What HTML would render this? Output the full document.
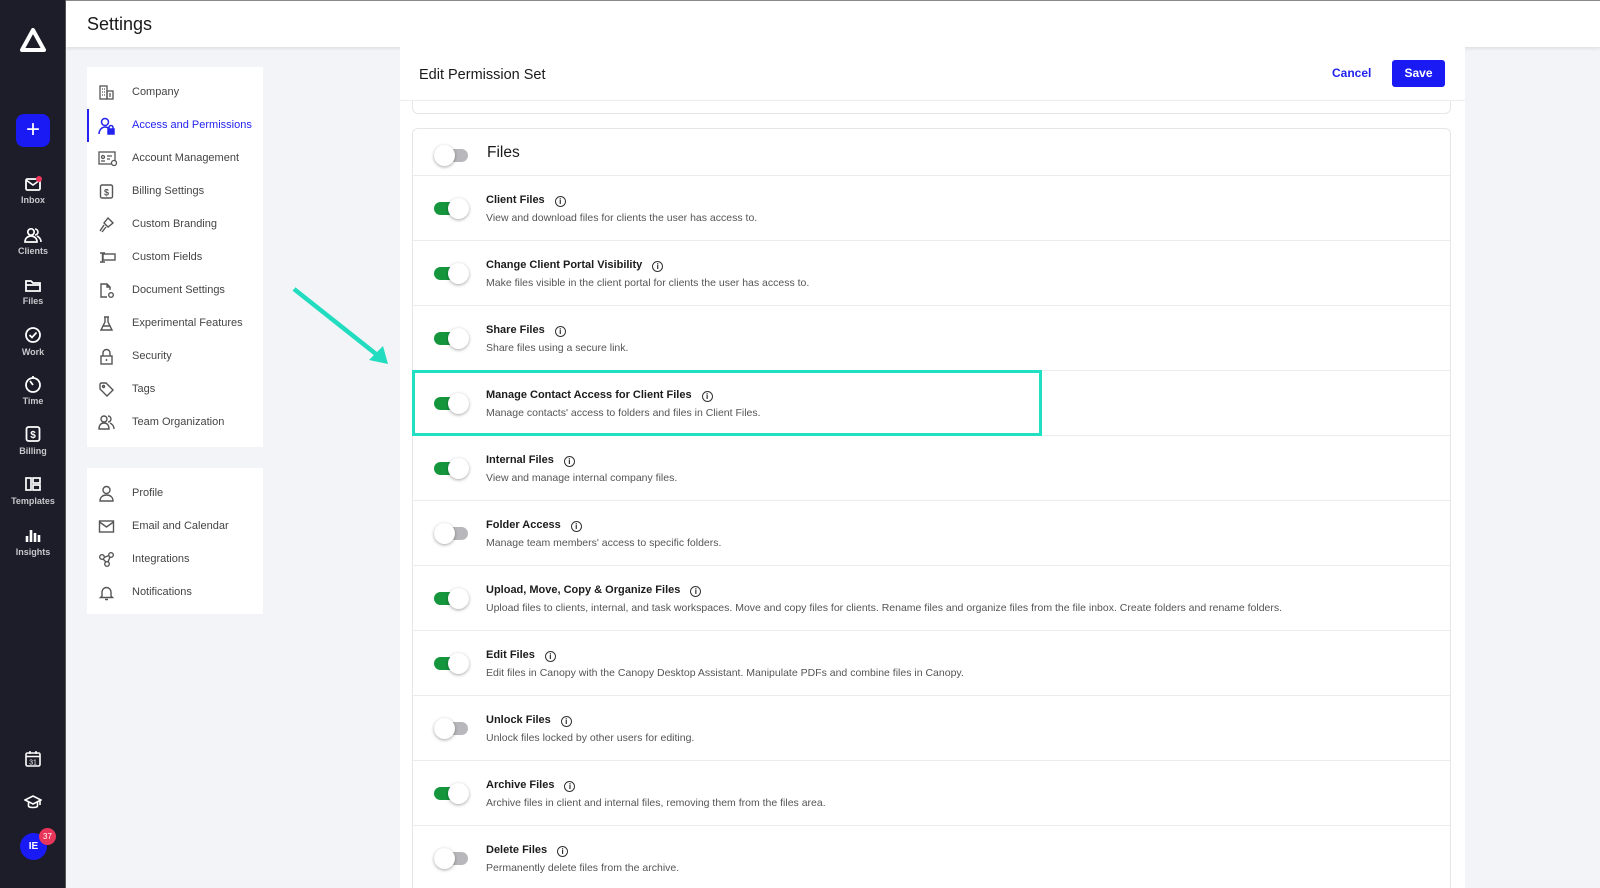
<!DOCTYPE html>
<html><head><meta charset="utf-8">
<style>
*{box-sizing:border-box;margin:0;padding:0}
html{width:1600px;height:888px;overflow:hidden}
body{width:1600px;height:888px;overflow:hidden;background:#f3f4f8;font-family:"Liberation Sans",sans-serif;position:relative}
.abs{position:absolute}
#side{left:0;top:0;width:66px;height:888px;background:#1d1c29;border-right:1px solid #555}
.nv{position:absolute;left:0;width:66px;text-align:center;color:#c8c8cc;font-size:9px;font-weight:bold}
.nv svg{display:block;margin:0 auto 3px}
#hdr{left:66px;top:0;width:1534px;height:47px;background:#fff;box-shadow:0 2px 3px rgba(0,0,0,.08);border-top:1px solid #888}
.menu{background:#fff;left:87px;width:176px}
.mi{position:absolute;left:0;width:176px;height:33px;font-size:11px;color:#444;line-height:33px;padding-left:45px;margin-top:2px}
.mi svg{position:absolute;left:11px;top:8px}
.mi.act{color:#2323f0;border-left:2px solid #2323f0;padding-left:43px}
.mi.act svg{left:9px}
#panel{left:400px;top:47px;width:1065px;height:841px;background:#fff;overflow:hidden}
.row{position:absolute;left:0;width:1039px;border-top:1px solid #ececf0}
.tg{position:absolute;left:21px;width:34px;height:13px;border-radius:7px;background:#b8b8bc}
.tg::after{content:"";position:absolute;top:-4px;left:0;width:21px;height:21px;border-radius:50%;background:#fff;box-shadow:0 1px 3px rgba(0,0,0,.35)}
.tg.on{background:#15963d}
.tg.on::after{left:14px}
.t{position:absolute;left:73px;font-size:11px;font-weight:bold;color:#1c1c1c;margin-top:3px}
.t i{display:inline-block;width:11px;height:11px;border:1.2px solid #333;border-radius:50%;font-style:normal;font-size:8px;text-align:center;line-height:9px;margin-left:10px;vertical-align:-1px}
.d{position:absolute;left:73px;font-size:10.5px;color:#555;margin-top:2px}
</style></head><body>
<div id="side" class="abs">
 <svg class="abs" style="left:20px;top:28px" width="26" height="24" viewBox="0 0 26 24"><path d="M13 2 L24 22 H2 Z" fill="none" stroke="#fff" stroke-width="4" stroke-linejoin="round"/></svg>
 <div class="abs" style="left:16px;top:114px;width:34px;height:33px;background:#1a1af5;border-radius:8px;color:#fff;font-size:24px;text-align:center;line-height:32px">+</div>
 <div class="nv" style="top:176px"><svg width="18" height="16" viewBox="0 0 18 16"><rect x="2" y="3" width="14" height="11" rx="1.5" fill="none" stroke="#fff" stroke-width="1.8"/><path d="M2 4l7 5 7-5" fill="none" stroke="#fff" stroke-width="1.6"/><circle cx="15" cy="3" r="3" fill="#f0365a"/></svg>Inbox</div>
 <div class="nv" style="top:227px"><svg width="18" height="16" viewBox="0 0 18 16"><circle cx="7" cy="5" r="3.2" fill="none" stroke="#fff" stroke-width="1.7"/><path d="M1 15c0-4 3-6 6-6s6 2 6 6z" fill="none" stroke="#fff" stroke-width="1.7"/><path d="M11 2a3 3 0 010 6M13 9c2 1 4 3 4 6" fill="none" stroke="#fff" stroke-width="1.6"/></svg>Clients</div>
 <div class="nv" style="top:277px"><svg width="18" height="16" viewBox="0 0 18 16"><path d="M2 4h5l2 2h7v8H2z M2 8h14" fill="none" stroke="#fff" stroke-width="1.8"/></svg>Files</div>
 <div class="nv" style="top:326px"><svg width="18" height="18" viewBox="0 0 18 18"><circle cx="9" cy="9" r="7" fill="none" stroke="#fff" stroke-width="1.8"/><path d="M5.5 9l2.5 2.5 4.5-5" fill="none" stroke="#fff" stroke-width="1.8"/></svg>Work</div>
 <div class="nv" style="top:375px"><svg width="18" height="18" viewBox="0 0 18 18"><circle cx="9" cy="10" r="7" fill="none" stroke="#fff" stroke-width="1.8"/><path d="M9 10L6 6M9 1v2" stroke="#fff" stroke-width="1.8"/></svg>Time</div>
 <div class="nv" style="top:425px"><svg width="18" height="18" viewBox="0 0 18 18"><rect x="2.5" y="2" width="13" height="14" rx="2" fill="none" stroke="#fff" stroke-width="1.8"/><text x="9" y="13" font-size="10" font-weight="bold" fill="#fff" text-anchor="middle" font-family="Liberation Sans">$</text></svg>Billing</div>
 <div class="nv" style="top:475px"><svg width="18" height="18" viewBox="0 0 18 18"><rect x="2" y="3" width="5" height="12" fill="none" stroke="#fff" stroke-width="1.7"/><rect x="9" y="3" width="7" height="5" fill="none" stroke="#fff" stroke-width="1.7"/><rect x="9" y="10" width="7" height="5" fill="none" stroke="#fff" stroke-width="1.7"/></svg>Templates</div>
 <div class="nv" style="top:526px"><svg width="18" height="18" viewBox="0 0 18 18"><path d="M3 16V10M7 16V4M11 16V7M15 16V9" stroke="#fff" stroke-width="2.6"/></svg>Insights</div>
 <svg class="abs" style="left:24px;top:750px" width="18" height="18" viewBox="0 0 18 18"><rect x="2" y="3" width="14" height="13" rx="1.5" fill="none" stroke="#fff" stroke-width="1.6"/><path d="M2 6.5h14M6 1v3M12 1v3" stroke="#fff" stroke-width="1.5"/><text x="9" y="14.5" font-size="7" fill="#fff" text-anchor="middle" font-family="Liberation Sans">31</text></svg>
 <svg class="abs" style="left:24px;top:793px" width="18" height="18" viewBox="0 0 18 18"><path d="M1 7l8-4 8 4-8 4z" fill="none" stroke="#fff" stroke-width="1.6"/><path d="M4.5 9v4c0 2 9 2 9 0V9M16 7v5" fill="none" stroke="#fff" stroke-width="1.6"/></svg>
 <div class="abs" style="left:20px;top:833px;width:27px;height:27px;border-radius:50%;background:#1a1af5;color:#fff;font-size:10px;font-weight:bold;text-align:center;line-height:27px">IE</div>
 <div class="abs" style="left:39px;top:828px;width:17px;height:17px;border-radius:50%;background:#e8365a;color:#fff;font-size:8px;text-align:center;line-height:17px">37</div>
</div>
<div id="hdr" class="abs"><div class="abs" style="left:21px;top:13px;font-size:18px;color:#1a1a1a">Settings</div></div>

<div class="abs menu" style="top:67px;height:380px">
 <div class="mi" style="top:7px"><svg width="17" height="17" viewBox="0 0 17 17" fill="none" stroke="#555" stroke-width="1.3"><rect x="2" y="2" width="7" height="13"/><rect x="9" y="7" width="6" height="8"/><path d="M4 5h1M6 5h1M4 8h1M6 8h1M4 11h1M6 11h1M11 10h2M11 12h2"/></svg>Company</div>
 <div class="mi act" style="top:40px"><svg width="18" height="18" viewBox="0 0 18 18" fill="none" stroke="#2323f0" stroke-width="1.5"><circle cx="7" cy="5" r="3.5"/><path d="M1 17c0-4 3-7 6-7 1.5 0 2.5.4 3.5 1"/><rect x="10" y="12" width="6" height="5" fill="#2323f0"/><path d="M11 12v-1.5a2 2 0 014 0V12"/></svg>Access and Permissions</div>
 <div class="mi" style="top:73px"><svg width="20" height="17" viewBox="0 0 20 17" fill="none" stroke="#555" stroke-width="1.3"><rect x="1" y="2" width="16" height="12"/><circle cx="5" cy="7" r="1.5"/><path d="M3 11h4M9 6h5M9 9h3"/><circle cx="16" cy="13" r="2.5" fill="#fff"/></svg>Account Management</div>
 <div class="mi" style="top:106px"><svg width="17" height="17" viewBox="0 0 17 17" fill="none" stroke="#555" stroke-width="1.4"><rect x="2.5" y="2" width="12" height="13" rx="1.5"/><text x="8.5" y="12.5" font-size="9" fill="#555" stroke="none" text-anchor="middle" font-family="Liberation Sans" font-weight="bold">$</text></svg>Billing Settings</div>
 <div class="mi" style="top:139px"><svg width="17" height="17" viewBox="0 0 17 17" fill="none" stroke="#555" stroke-width="1.4"><path d="M10 2l5 5-5 4-4-4zM6 9l-4 6M8 11l-4 5"/></svg>Custom Branding</div>
 <div class="mi" style="top:172px"><svg width="18" height="17" viewBox="0 0 18 17" fill="none" stroke="#555" stroke-width="1.4"><rect x="5" y="5" width="12" height="6"/><path d="M2 4h5M2 13h5M4.5 4v9"/></svg>Custom Fields</div>
 <div class="mi" style="top:205px"><svg width="17" height="17" viewBox="0 0 17 17" fill="none" stroke="#555" stroke-width="1.4"><path d="M12 8V5l-3-3H3v13h6M9 2v3h3"/><circle cx="13" cy="13" r="2.3"/></svg>Document Settings</div>
 <div class="mi" style="top:238px"><svg width="17" height="17" viewBox="0 0 17 17" fill="none" stroke="#555" stroke-width="1.4"><path d="M6 2h5M7 2v5L3 15h11L10 7V2M5 11h7"/></svg>Experimental Features</div>
 <div class="mi" style="top:271px"><svg width="17" height="17" viewBox="0 0 17 17" fill="none" stroke="#555" stroke-width="1.4"><rect x="3" y="8" width="11" height="8"/><path d="M5 8V5a3.5 3.5 0 017 0v3M8.5 11v2"/></svg>Security</div>
 <div class="mi" style="top:304px"><svg width="17" height="17" viewBox="0 0 17 17" fill="none" stroke="#555" stroke-width="1.4"><path d="M2 3v5l7 7 6-6-7-7H3z"/><circle cx="5.5" cy="5.5" r="1"/></svg>Tags</div>
 <div class="mi" style="top:337px"><svg width="18" height="17" viewBox="0 0 18 17" fill="none" stroke="#555" stroke-width="1.4"><circle cx="6" cy="5" r="3"/><path d="M1 15c0-4 2-6 5-6s5 2 5 6zM10 2a3 3 0 010 6M12 9c2 1 4 3 4 6"/></svg>Team Organization</div>
</div>
<div class="abs menu" style="top:468px;height:146px">
 <div class="mi" style="top:7px"><svg width="17" height="17" viewBox="0 0 17 17" fill="none" stroke="#555" stroke-width="1.4"><circle cx="8.5" cy="5" r="3.5"/><path d="M2 16c0-4 3-6 6.5-6s6.5 2 6.5 6z"/></svg>Profile</div>
 <div class="mi" style="top:40px"><svg width="17" height="17" viewBox="0 0 17 17" fill="none" stroke="#555" stroke-width="1.4"><rect x="1.5" y="3" width="14" height="11"/><path d="M1.5 4l7 5 7-5"/></svg>Email and Calendar</div>
 <div class="mi" style="top:73px"><svg width="17" height="17" viewBox="0 0 17 17" fill="none" stroke="#555" stroke-width="1.4"><circle cx="4" cy="6" r="2.3"/><circle cx="13" cy="4" r="2.3"/><circle cx="9" cy="13" r="2.3"/><path d="M6 6.5l5-2M5 8l3 3M12 6l-2 5"/></svg>Integrations</div>
 <div class="mi" style="top:106px"><svg width="17" height="17" viewBox="0 0 17 17" fill="none" stroke="#555" stroke-width="1.4"><path d="M4 12V8a4.5 4.5 0 019 0v4l1.5 1.5h-12zM7 15.5h3"/></svg>Notifications</div>
</div>

<svg class="abs" style="left:285px;top:280px" width="110" height="95" viewBox="0 0 110 95"><path d="M9 9 L96 78" stroke="#22dcbf" stroke-width="4.5"/><path d="M103 84 L84 80 L98 66 Z" fill="#22dcbf"/></svg>

<div id="panel" class="abs">
 <div class="abs" style="left:19px;top:20px;font-size:14.5px;color:#1a1a1a;font-weight:500">Edit Permission Set</div>
 <div class="abs" style="left:932px;top:19px;font-size:12px;font-weight:bold;color:#2323f0">Cancel</div>
 <div class="abs" style="left:992px;top:13px;width:53px;height:27px;background:#1a1af5;border-radius:3px;color:#fff;font-size:12px;font-weight:bold;text-align:center;line-height:27px">Save</div>
 <div class="abs" style="left:0;top:53px;width:1065px;border-top:1px solid #ececf0"></div>
 <div class="abs" style="left:12px;top:54px;width:1039px;height:13px;border:1px solid #e6e6ea;border-top:none;border-radius:0 0 6px 6px"></div>
 <div class="abs" style="left:12px;top:81px;width:1039px;height:760px;border:1px solid #e6e6ea;border-radius:6px 6px 0 0;border-bottom:none;overflow:hidden">
  <div class="tg" style="top:20px"></div>
  <div class="abs" style="left:74px;top:15px;font-size:15.5px;font-weight:500;color:#1a1a1a">Files</div>
  <div class="row" style="top:46px;height:65px"><div class="tg on" style="top:26px"></div><div class="t" style="top:15px">Client Files<i>i</i></div><div class="d" style="top:34px">View and download files for clients the user has access to.</div></div>
  <div class="row" style="top:111px;height:65px"><div class="tg on" style="top:26px"></div><div class="t" style="top:15px">Change Client Portal Visibility<i>i</i></div><div class="d" style="top:34px">Make files visible in the client portal for clients the user has access to.</div></div>
  <div class="row" style="top:176px;height:65px"><div class="tg on" style="top:26px"></div><div class="t" style="top:15px">Share Files<i>i</i></div><div class="d" style="top:34px">Share files using a secure link.</div></div>
  <div class="row" style="top:241px;height:65px"><div class="tg on" style="top:26px"></div><div class="t" style="top:15px">Manage Contact Access for Client Files<i>i</i></div><div class="d" style="top:34px">Manage contacts' access to folders and files in Client Files.</div></div>
  <div class="row" style="top:306px;height:65px"><div class="tg on" style="top:26px"></div><div class="t" style="top:15px">Internal Files<i>i</i></div><div class="d" style="top:34px">View and manage internal company files.</div></div>
  <div class="row" style="top:371px;height:65px"><div class="tg" style="top:26px"></div><div class="t" style="top:15px">Folder Access<i>i</i></div><div class="d" style="top:34px">Manage team members' access to specific folders.</div></div>
  <div class="row" style="top:436px;height:65px"><div class="tg on" style="top:26px"></div><div class="t" style="top:15px">Upload, Move, Copy &amp; Organize Files<i>i</i></div><div class="d" style="top:34px">Upload files to clients, internal, and task workspaces. Move and copy files for clients. Rename files and organize files from the file inbox. Create folders and rename folders.</div></div>
  <div class="row" style="top:501px;height:65px"><div class="tg on" style="top:26px"></div><div class="t" style="top:15px">Edit Files<i>i</i></div><div class="d" style="top:34px">Edit files in Canopy with the Canopy Desktop Assistant. Manipulate PDFs and combine files in Canopy.</div></div>
  <div class="row" style="top:566px;height:65px"><div class="tg" style="top:26px"></div><div class="t" style="top:15px">Unlock Files<i>i</i></div><div class="d" style="top:34px">Unlock files locked by other users for editing.</div></div>
  <div class="row" style="top:631px;height:65px"><div class="tg on" style="top:26px"></div><div class="t" style="top:15px">Archive Files<i>i</i></div><div class="d" style="top:34px">Archive files in client and internal files, removing them from the files area.</div></div>
  <div class="row" style="top:696px;height:64px"><div class="tg" style="top:26px"></div><div class="t" style="top:15px">Delete Files<i>i</i></div><div class="d" style="top:34px">Permanently delete files from the archive.</div></div>
 </div>
 <div class="abs" style="left:12px;top:323px;width:630px;height:66px;border:3px solid #1fe0c2"></div>
</div>
</body></html>
